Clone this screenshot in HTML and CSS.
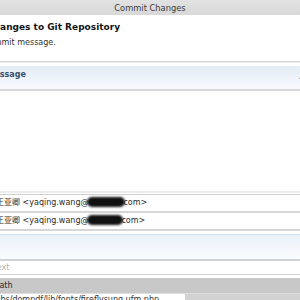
FILE: index.html
```html
<!DOCTYPE html>
<html lang="en">
<head>
    <meta charset="UTF-8">
    <title>Commit Changes</title>
    <link rel="stylesheet" href="styles.css">
</head>
<body>
    <div class="titlebar">Commit Changes</div>
    <div class="dialog">
        <div class="banner">
            <h1>Commit Changes to Git Repository</h1>
            <p>Enter a commit message.</p>
        </div>
        <div class="section">
            <div class="section-head">
                <span class="label">Commit Message</span>
                <span class="toggle">&#708;</span>
            </div>
            <div class="message"></div>
            <div class="people">
                <div class="person">王亚卿 &lt;yaqing.wang@<span class="blot wide"></span>com&gt;</div>
                <div class="person">王亚卿 &lt;yaqing.wang@<span class="blot"></span>com&gt;</div>
            </div>
        </div>
        <div class="section files">
            <div class="files-head"></div>
            <div class="filter">type filter text</div>
            <div class="table-head">Path</div>
            <div class="file">
                <span class="path">libs/dompdf/lib/fonts/fireflysung.ufm.php</span>
                <span class="rest"></span>
            </div>
        </div>
    </div>
</body>
</html>
```

FILE: styles.css
```css
body {
    margin: 0;
    width: 300px;
    height: 300px;
    overflow: hidden;
    background: #ffffff;
    font-family: "DejaVu Sans", "Noto Sans CJK SC", sans-serif;
    font-size: 8px;
    color: #2e2e2e;
}

.titlebar {
    height: 15px;
    line-height: 16px;
    background: linear-gradient(#e2e2e2, #d8d8d8);
    text-align: center;
    color: #3a3a3a;
    font-size: 8.3px;
}

.banner {
    height: 46px;
    padding-top: 6px;
    box-sizing: border-box;
}

.banner h1 {
    margin: 0 0 5px 0;
    font-size: 9px;
    font-weight: bold;
    line-height: 12px;
    color: #141414;
    text-indent: -55px;
    white-space: nowrap;
}

.banner p {
    margin: 0;
    line-height: 10px;
    color: #333;
    text-indent: -47px;
    white-space: nowrap;
}

.section {
    border-top: 1px solid #d4d4d4;
    box-shadow: inset 0 1px 0 #ececec;
    padding-top: 4px;
}

.section-head {
    display: flex;
    justify-content: space-between;
    height: 23px;
    line-height: 18px;
    background: linear-gradient(#e4ecf7, #f7f9fd);
    border-bottom: 2px solid #d8d8d8;
    font-weight: bold;
    font-size: 8px;
    color: #364f70;
}

.label {
    text-indent: -51px;
    white-space: nowrap;
}

.toggle {
    font-size: 7px;
    color: #666;
    padding-top: 6px;
    margin-right: -2px;
}

.message {
    height: 100px;
    border-bottom: 2px solid #ededed;
}

.people {
    margin-top: 1px;
    border-top: 1px solid #d0d0d0;
}

.person {
    height: 16px;
    line-height: 16px;
    text-indent: -4px;
    border-bottom: 2px solid #d6d6d6;
    white-space: nowrap;
    color: #2a2a2a;
}

.blot {
    display: inline-block;
    width: 36px;
    height: 10px;
    margin: 0 -2px 0 -1px;
    vertical-align: -2px;
    background: #111;
    border-radius: 5px;
    filter: blur(1.3px);
}

.blot.wide {
    width: 38px;
}

.files {
    margin-top: 3px;
    border-top: 1px solid #cfdff0;
    box-shadow: none;
    padding-top: 0;
}

.files-head {
    height: 24px;
    background: linear-gradient(#eaf1fa, #fbfcfe);
    border-bottom: 2px solid #d2d2d2;
}

.filter {
    height: 13px;
    line-height: 14px;
    text-indent: -48px;
    white-space: nowrap;
    color: #b4b4b4;
    border-bottom: 1px solid #d4d4d4;
}

.table-head {
    margin-top: 3px;
    height: 15px;
    line-height: 15px;
    text-indent: -5px;
    background: #c8c8c8;
    border-bottom: 1px solid #dedede;
    color: #2a2a2a;
}

.file {
    display: flex;
    height: 12px;
    line-height: 11px;
    white-space: nowrap;
    color: #333;
}

.path {
    width: 185px;
    text-indent: -4px;
    overflow: hidden;
}

.rest {
    flex: 1;
    background: #d2d2d2;
}
```
